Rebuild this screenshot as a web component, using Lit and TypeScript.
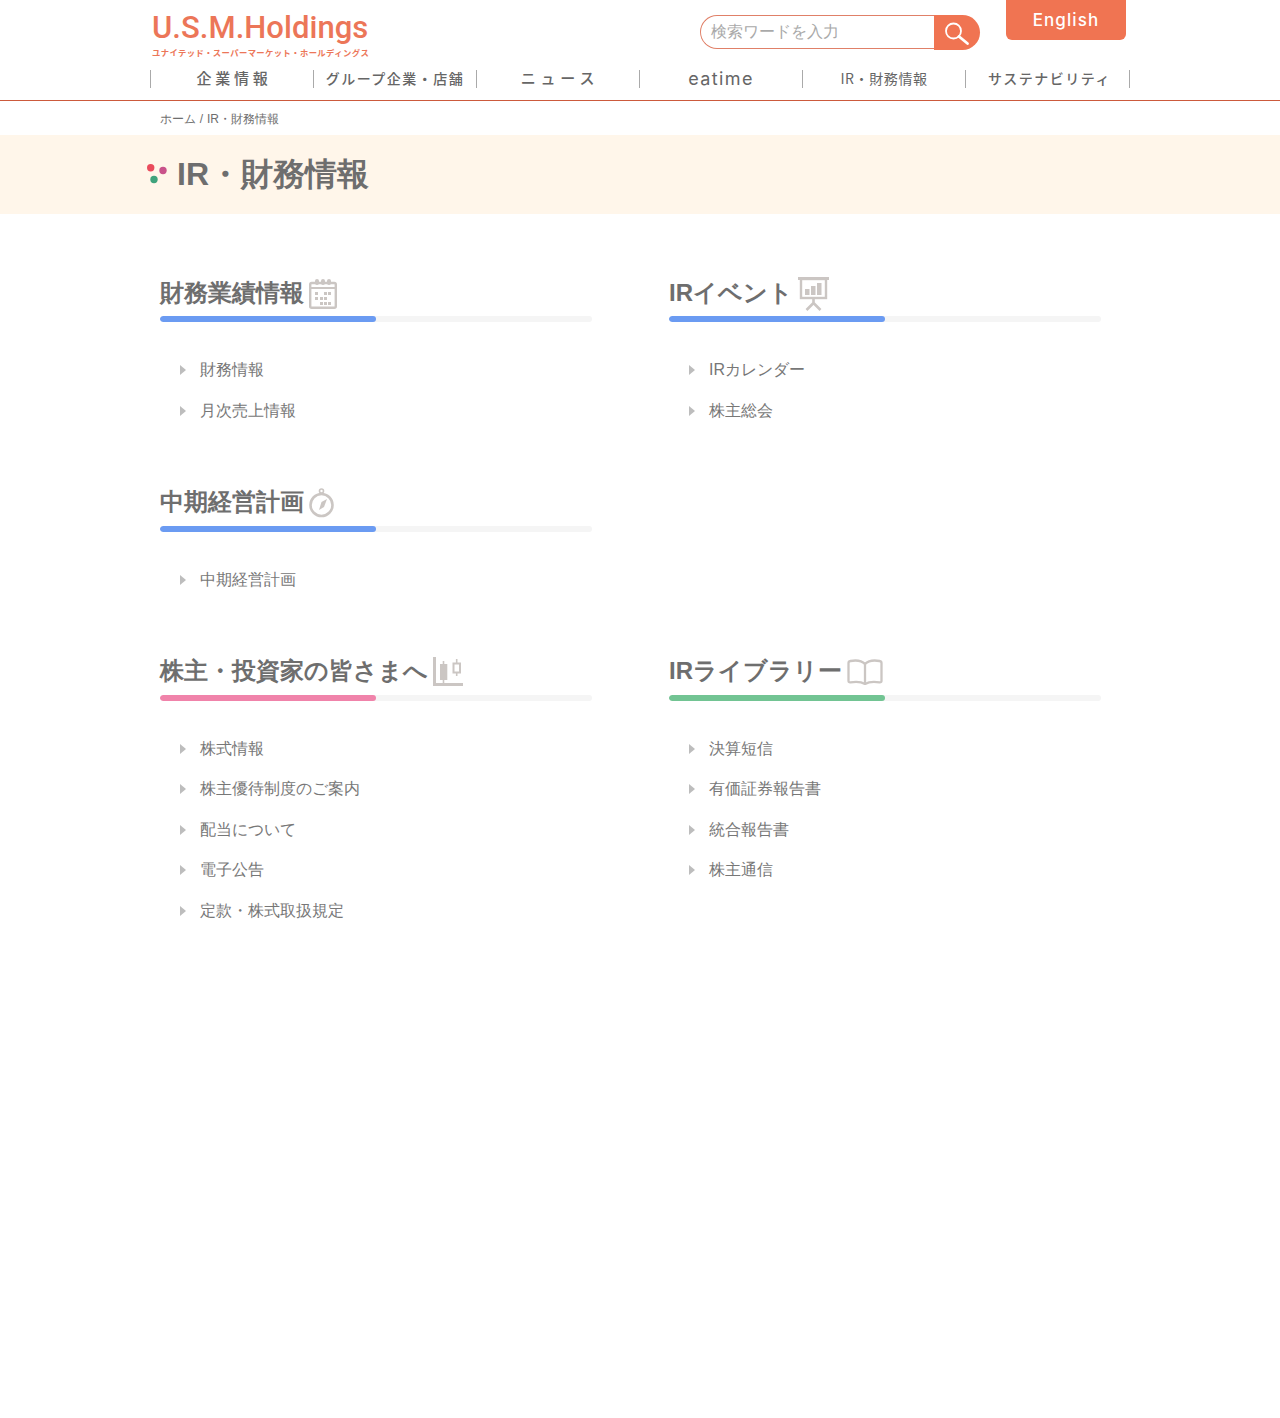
import { LitElement, html, css, svg, unsafeCSS } from "lit";
import { customElement } from "lit/decorators.js";

const FONT = unsafeCSS(`"Liberation Sans", sans-serif`);

const icons: Record<string, unknown> = {
  calendar: svg`<svg class="ico i-low" width="28" height="31" viewBox="0 0 28 31" fill="none" stroke="#cbc6c3"><rect x="1.2" y="5" width="25.6" height="24.8" rx="1.5" stroke-width="2.4"/><path d="M1 10h26" stroke-width="2"/><g fill="#cbc6c3" stroke="none"><rect x="6" y="1" width="4" height="6" rx="2"/><rect x="12" y="1" width="4" height="6" rx="2"/><rect x="18" y="1" width="4" height="6" rx="2"/><rect x="15" y="14" width="3" height="3"/><rect x="19" y="14" width="3" height="3"/><rect x="6" y="14" width="3" height="3"/><rect x="6" y="19" width="3" height="3"/><rect x="11" y="19" width="3" height="3"/><rect x="15" y="19" width="3" height="3"/><rect x="11" y="24" width="3" height="3"/><rect x="15" y="24" width="3" height="3"/><rect x="19" y="24" width="3" height="3"/></g></svg>`,
  board: svg`<svg class="ico i-board" width="31" height="35" viewBox="0 0 31 35" fill="none" stroke="#cbc6c3"><path d="M0 1.5h31" stroke-width="3"/><rect x="3" y="2" width="25" height="19" stroke-width="2.4"/><path d="M15.5 21v5M15.5 26l-7 7M15.5 26l7 7" stroke-width="2.6"/><g fill="#cbc6c3" stroke="none"><rect x="7" y="12" width="4.5" height="6"/><rect x="13" y="9" width="4.5" height="9"/><rect x="19" y="6" width="4.5" height="12"/></g></svg>`,
  compass: svg`<svg class="ico i-low" width="25" height="30" viewBox="0 0 25 30" fill="none" stroke="#cbc6c3"><circle cx="12.5" cy="17" r="11" stroke-width="2.6"/><circle cx="12.5" cy="3" r="2" stroke-width="1.6"/><path d="M12.5 5v2" stroke-width="2"/><path d="M18 11l-3 8-5 3 2.5-8z" fill="#cbc6c3" stroke="none"/></svg>`,
  chart: svg`<svg class="ico i-low" width="30" height="30" viewBox="0 0 30 30" fill="none" stroke="#cbc6c3"><path d="M1.5 0v27.5H30" stroke-width="3"/><path d="M10.5 4v22" stroke-width="1.6"/><rect x="7" y="7" width="7.3" height="16" fill="#cbc6c3" stroke="none"/><path d="M23.7 2v17" stroke-width="1.6"/><rect x="20.5" y="6.500" width="6.5" height="9" fill="#fff" stroke-width="2"/></svg>`,
  book: svg`<svg class="ico i-low" width="36" height="26" viewBox="0 0 36 26" fill="none" stroke="#cbc6c3" stroke-width="2.3" stroke-linejoin="round"><path d="M18 5C15 2 9 1 3.5 2 2 2.3 1.5 3 1.5 4v18c0 1 .8 1.5 2 1.3 5-.8 11-.5 14.5 1.7 3.5-2.200 9.5-2.500 14.500-1.700 1.200.2 2-.3 2-1.300V4c0-1-.5-1.700-2-2C27 1 21 2 18 5z"/><path d="M18 5v20"/></svg>`,
};

const blue = "#6b9bf2";
const sections = [
  { title: "財務業績情報", icon: "calendar", color: blue, items: ["財務情報", "月次売上情報"] },
  { title: "IRイベント", icon: "board", color: blue, items: ["IRカレンダー", "株主総会"] },
  { title: "中期経営計画", icon: "compass", color: blue, items: ["中期経営計画"] },
  null,
  { title: "株主・投資家の皆さまへ", icon: "chart", color: "#f083aa", items: ["株式情報", "株主優待制度のご案内", "配当について", "電子公告", "定款・株式取扱規定"] },
  { title: "IRライブラリー", icon: "book", color: "#72c493", items: ["決算短信", "有価証券報告書", "統合報告書", "株主通信"] },
];
const nav = [
  ["企業情報", "n1"],
  ["グループ企業・店舗", "n2"],
  ["ニュース", "n3"],
  ["eatime", "n4"],
  ["IR・財務情報", "n5"],
  ["サステナビリティ", "n6"],
];

@customElement("app-root")
export class AppRoot extends LitElement {
  static styles = css`
    :host { display: block; min-height: 1418px; background: #fff; font-family: ${FONT}; color: #666; }
    a { color: inherit; text-decoration: none; }
    .header { height: 100px; border-bottom: 1px solid #cc5a3c; box-sizing: content-box; }
    .hwrap { width: 980px; margin-left: 150px; }
    .top { display: flex; height: 70px; align-items: flex-start; }
    .logo { margin: 11px 0 0 2px; width: 330px; color: #ec7658; }
    .logo b { display: block; font-family: "Roboto", sans-serif; font-weight: 500; font-size: 31px; line-height: 33px; letter-spacing: 0.05px; white-space: nowrap; }
    .logo span { display: block; font-family: "Noto Sans CJK JP", sans-serif; font-weight: 700; font-size: 8.3px; line-height: 12px; margin-top: 2px; letter-spacing: 0.42px; white-space: nowrap; }
    .search { display: flex; width: 280px; height: 35px; margin: 15px 0 0 218px; flex: none; }
    .search .field { box-sizing: border-box; flex: 1; height: 34px; border: 1px solid #e08068; border-right: none; border-radius: 17px 0 0 17px; padding-left: 10px; font-size: 16px; line-height: 32px; color: #a9a9a9; }
    .search .btn { width: 46px; height: 35px; background: #f07452; border-radius: 0 17.5px 17.5px 0; display: flex; align-items: center; justify-content: center; }
    .en { flex: none; margin-left: 26px; width: 120px; height: 40px; border-radius: 0 0 6px 6px; background: #f07452; color: #fff; font-family: "Inter", sans-serif; font-weight: 500; font-size: 17px; letter-spacing: 1.1px; text-align: center; line-height: 40px; }
    .nav { display: grid; grid-template-columns: repeat(6, 163px); width: 980px; border-right: 1px solid #aaa; height: 18px; box-sizing: border-box; }
    .nav a { border-left: 1px solid #aaa; height: 18px; display: flex; align-items: center; justify-content: center; font-family: "Noto Sans CJK JP", sans-serif; white-space: nowrap; color: #666; font-weight: 500; line-height: 16px; padding-bottom: 2px; box-sizing: border-box; }
    .nav .n1 { font-size: 15px; letter-spacing: 3.7px; padding-left: 4px; }
    .nav .n2 { font-size: 14px; letter-spacing: 1.5px; }
    .nav .n3 { font-size: 15px; letter-spacing: 4.8px; padding-left: 4px; }
    .nav .n4 { font-size: 18px; letter-spacing: 1.4px; font-weight: 400; font-family: "Inter", sans-serif; padding-bottom: 0; }
    .nav .n5 { font-size: 14px; letter-spacing: 0.6px; font-weight: 400; }
    .nav .n6 { font-size: 14px; letter-spacing: 1.5px; padding-left: 5px; }
    .crumb { font-size: 12px; line-height: 14px; padding: 11px 0 9px 160px; height: 14px; color: #6e6e6e; word-spacing: 0.5px; }
    .banner { height: 79px; background: #fff6ea; display: flex; align-items: center; padding-left: 146px; gap: 9px; box-sizing: border-box; padding-bottom: 1px; }
    .banner h1 { margin: 0; font-size: 32px; line-height: 40px; font-weight: 700; color: #6e6e6e; }
    .dots { width: 22px; height: 22px; flex: none; }
    .grid { display: grid; grid-template-columns: 432px 432px; column-gap: 77px; padding: 60px 0 0 160px; grid-template-rows: 209.5px 169px auto; }
    .sec h2 { margin: 0; font-size: 24px; line-height: 36px; font-weight: 700; color: #6e6e6e; display: flex; align-items: center; height: 42px; gap: 5px; white-space: nowrap; padding-bottom: 5px; box-sizing: border-box; }
    .ico { flex: none; }
    .i-board { margin-top: 4px; }
    .i-low { margin-top: 2px; }
    .bar { height: 6px; border-radius: 3px; background: #f5f5f5; overflow: hidden; }
    .bar i { display: block; width: 216px; height: 6px; border-radius: 3px; }
    ul { list-style: none; margin: 28.5px 0 0; padding: 0; }
    li { display: flex; align-items: center; height: 40.5px; font-size: 16px; color: #777; padding-left: 20px; gap: 14px; }
    li::before { content: ""; width: 0; height: 0; border-left: 6px solid #bdbdbd; border-top: 5px solid transparent; border-bottom: 5px solid transparent; margin-top: -1px; }
  `;

  render() {
    return html`
      <div class="header">
        <div class="hwrap">
          <div class="top">
            <div class="logo"><b>U.S.M.Holdings</b><span>ユナイテッド・スーパーマーケット・ホールディングス</span></div>
            <div class="search">
              <div class="field">検索ワードを入力</div>
              <div class="btn">
                <svg width="26" height="26" viewBox="0 0 26 26" fill="none" stroke="#fff"><circle cx="9.5" cy="11" r="7.5" stroke-width="1.8"/><path d="M15 16.5l8.5 7" stroke-width="2.8" stroke-linecap="round"/></svg>
              </div>
            </div>
            <a class="en" href="#">English</a>
          </div>
          <nav class="nav">${nav.map(([t, c]) => html`<a class=${c} href="#">${t}</a>`)}</nav>
        </div>
      </div>
      <div class="crumb">ホーム / IR・財務情報</div>
      <div class="banner">
        <svg class="dots" viewBox="0 0 22 22"><circle cx="4.7" cy="4.7" r="3.7" fill="#ea4b5c"/><circle cx="17" cy="7.5" r="3.7" fill="#c9528a"/><circle cx="8" cy="16.5" r="3.7" fill="#3fa37c"/></svg>
        <h1>IR・財務情報</h1>
      </div>
      <div class="grid">
        ${sections.map((s) =>
          s
            ? html`<section class="sec">
                <h2>${s.title}${icons[s.icon]}</h2>
                <div class="bar"><i style="background:${s.color}"></i></div>
                <ul>${s.items.map((t) => html`<li><a href="#">${t}</a></li>`)}</ul>
              </section>`
            : html`<div></div>`
        )}
      </div>
    `;
  }
}
